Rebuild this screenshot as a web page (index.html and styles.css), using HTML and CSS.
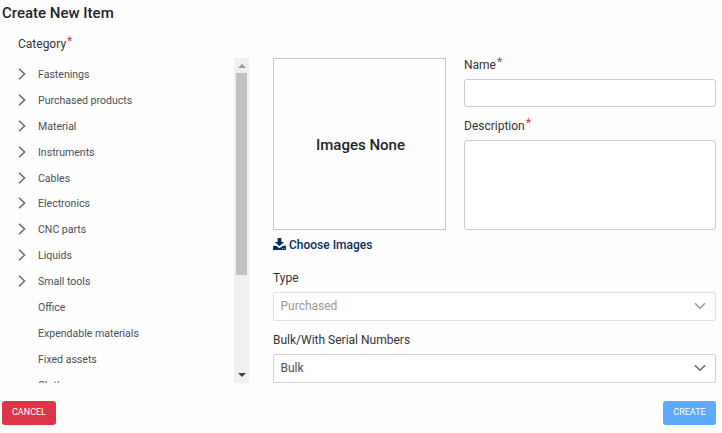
FILE: index.html
```html
<!DOCTYPE html>
<html lang="en">
<head>
<meta charset="utf-8">
<title>Create New Item</title>
<link rel="stylesheet" href="styles.css">
</head>
<body>
<svg class="defs" aria-hidden="true">
  <symbol id="right" viewBox="0 0 8 12"><path d="M1 .8 6.6 6 1 11.2"/></symbol>
  <symbol id="down" viewBox="0 0 12 8"><path d="M1 1.2 6 6.2 11 1.2"/></symbol>
</svg>
<form class="dialog">
  <h1>Create New Item</h1>
  <div class="category-label">Category<span class="req">*</span></div>
  <main>
    <div class="category">
      <ul>
        <li><svg><use href="#right"/></svg><span>Fastenings</span></li>
        <li><svg><use href="#right"/></svg><span>Purchased products</span></li>
        <li><svg><use href="#right"/></svg><span>Material</span></li>
        <li><svg><use href="#right"/></svg><span>Instruments</span></li>
        <li><svg><use href="#right"/></svg><span>Cables</span></li>
        <li><svg><use href="#right"/></svg><span>Electronics</span></li>
        <li><svg><use href="#right"/></svg><span>CNC parts</span></li>
        <li><svg><use href="#right"/></svg><span>Liquids</span></li>
        <li><svg><use href="#right"/></svg><span>Small tools</span></li>
        <li class="leaf"><span>Office</span></li>
        <li class="leaf"><span>Expendable materials</span></li>
        <li class="leaf"><span>Fixed assets</span></li>
        <li class="leaf"><span>Clothes</span></li>
      </ul>
      <div class="scrollbar"><i class="up"></i><div class="thumb"></div><i class="dn"></i></div>
    </div>
    <div class="fields">
      <div class="top">
        <div class="images">
          <div class="preview">Images None</div>
          <a class="choose"><svg viewBox="0 0 13 13"><path d="M4.6 0h3.8v4h2.8L6.5 8.3 1.8 4h2.8z"/><path d="M.6 7.8h2.6l3.3 2.4 3.3-2.4h2.6q.6 0 .6.6v3q0 .6-.6.6H.6q-.6 0-.6-.6v-3q0-.6.6-.6zM9 10.2v.7h.7v-.7zm1.8 0v.7h.7v-.7z" fill-rule="evenodd"/></svg><span>Choose Images</span></a>
        </div>
        <div class="texts">
          <label>Name<span class="req">*</span></label>
          <div class="box input"></div>
          <label class="desc">Description<span class="req">*</span></label>
          <div class="box area"></div>
        </div>
      </div>
      <label class="type">Type</label>
      <div class="box select disabled"><span>Purchased</span><svg><use href="#down"/></svg></div>
      <label class="bulk">Bulk/With Serial Numbers</label>
      <div class="box select"><span>Bulk</span><svg><use href="#down"/></svg></div>
    </div>
  </main>
  <footer><button type="button" class="cancel">CANCEL</button><button type="button" class="create">CREATE</button></footer>
</form>
</body>
</html>
```
FILE: styles.css
```css
* { box-sizing: border-box; }
body { margin: 0; background: #fefefe; font: 12px/16px Roboto, sans-serif; color: #333; overflow: hidden; }
.defs { display: none; }
svg { fill: none; flex: none; }
.dialog { width: 722px; height: 433px; padding: 3px 6px 0 2px; }
h1 { margin: 0; font-size: 15px; line-height: 20px; font-weight: 500; color: #212529; }
.category-label { height: 35px; padding: 13px 0 0 16px; }
.req { color: #dc3545; font-size: 12.5px; line-height: 0; position: relative; top: -3px; margin-left: 1px; }
main { display: flex; gap: 24px; height: 325px; }
.category { display: flex; width: 247px; overflow: hidden; }
ul { flex: 1; margin: 0; padding: 3px 0 0 16px; list-style: none; }
li { display: flex; align-items: center; gap: 12px; height: 25.92px; font-size: 10.55px; color: #495057; }
li span { padding-top: 2px; }
li svg { width: 8px; height: 12px; stroke: #666; stroke-width: 1.5; }
.leaf { padding-left: 20px; }
.scrollbar { width: 15px; background: #f0f0f0; display: flex; flex-direction: column; align-items: center; }
.thumb { width: 11px; height: 202px; margin-top: 5px; background: #c1c1c1; }
.up, .dn { border: 4px solid transparent; border-top: 0; border-bottom-color: #999; margin-top: 6px; height: 4px; }
.dn { border-bottom: 0; border-top: 4px solid #444; margin: auto 0 6px; }
.fields { flex: 1; display: flex; flex-direction: column; }
.top { display: flex; gap: 18px; height: 212px; }
.images { width: 173px; }
.preview { height: 172px; border: 1px solid #c6c6c6; display: flex; align-items: center; justify-content: center; font-size: 15px; font-weight: 500; color: #212529; padding: 2px 0 0 2px; }
.choose { display: flex; align-items: center; gap: 3px; margin-top: 7px; color: #0b2e63; font-weight: 500; }
.choose svg { width: 13px; height: 13px; margin-bottom: 2px; fill: #0b2e63; }
.texts { flex: 1; margin-top: -1px; }
label { display: block; height: 22px; }
.box { border: 1px solid #ccc; border-radius: 3px; background: #fff; }
.input { height: 28px; }
.texts label.desc { height: 33px; padding-top: 11px; }
.area { height: 90px; }
.bulk { height: 33px; padding-top: 11px; }
.select { height: 29px; display: flex; align-items: center; justify-content: space-between; padding: 0 9px 2px 7px; border-color: #ced4da; border-radius: 2px; color: #495057; }
.select span { margin-left: -.5px; }
.select svg { width: 12px; height: 8px; stroke: #666; stroke-width: 1.5; }
.disabled { color: #999; border-color: #dfe2e5; }
.disabled svg { stroke: #999; }
footer { display: flex; justify-content: space-between; padding-top: 18px; }
button { border: 0; border-radius: 3px; height: 24px; padding: 0 0 2px; font: 9px/16px Roboto, sans-serif; color: #fff; }
.cancel { width: 54px; background: #dc3545; }
.create { width: 53px; background: #5caaff; }
```
